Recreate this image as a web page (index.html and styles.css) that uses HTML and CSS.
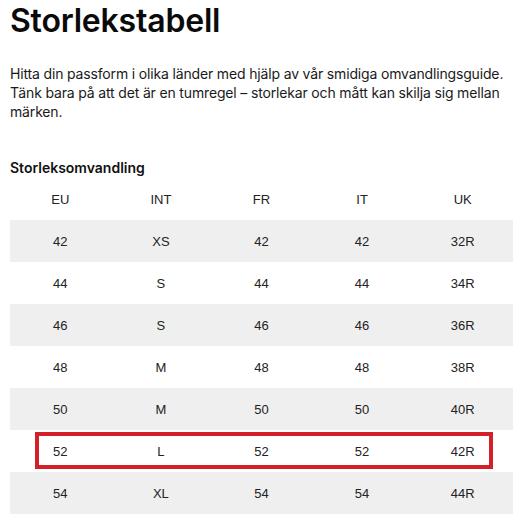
FILE: index.html
```html
<!DOCTYPE html>
<html lang="sv">
<head>
<meta charset="utf-8">
<link rel="stylesheet" href="styles.css">
</head>
<body>
<main class="page">
  <h1 class="title">Storlekstabell</h1>
  <p class="intro">Hitta din passform i olika länder med hjälp av vår smidiga omvandlingsguide. Tänk bara på att det är en tumregel – storlekar och mått kan skilja sig mellan märken.</p>
  <h2 class="subtitle">Storleksomvandling</h2>
  <div class="table">
    <div class="row head"><span>EU</span><span>INT</span><span>FR</span><span>IT</span><span>UK</span></div>
    <div class="row alt"><span>42</span><span>XS</span><span>42</span><span>42</span><span>32R</span></div>
    <div class="row"><span>44</span><span>S</span><span>44</span><span>44</span><span>34R</span></div>
    <div class="row alt"><span>46</span><span>S</span><span>46</span><span>46</span><span>36R</span></div>
    <div class="row"><span>48</span><span>M</span><span>48</span><span>48</span><span>38R</span></div>
    <div class="row alt"><span>50</span><span>M</span><span>50</span><span>50</span><span>40R</span></div>
    <div class="row marked"><span>52</span><span>L</span><span>52</span><span>52</span><span>42R</span><i class="mark"></i></div>
    <div class="row alt"><span>54</span><span>XL</span><span>54</span><span>54</span><span>44R</span></div>
  </div>
</main>
</body>
</html>
```
FILE: styles.css
```css
html, body { margin: 0; padding: 0; background: #fff; }
body { font-family: Inter, "Liberation Sans", Arial, sans-serif; color: #111; }
.page { padding: 1px 7px 0 10px; width: 503px; }
.title { margin: 0; font-size: 32px; line-height: 40px; font-weight: 600; letter-spacing: -0.2px; color: #0a0a0a; }
.intro { margin: 23px -6px 0 0; font-size: 14px; line-height: 19px; letter-spacing: -0.16px; color: #1a1a1a; }
.subtitle { margin: 37px 0 0; font-size: 14px; line-height: 20px; font-weight: 600; color: #111; }
.table { margin-top: 0; font-family: "Liberation Sans", Arial, sans-serif; font-size: 13px; color: #222; }
.row { display: grid; grid-template-columns: repeat(5, 1fr); height: 42px; align-items: center; text-align: center; position: relative; }
.row.alt { background: #efefef; }
.mark { position: absolute; left: 25px; right: 20px; top: 2px; bottom: 3px; border: 4px solid #d42028; }
```
